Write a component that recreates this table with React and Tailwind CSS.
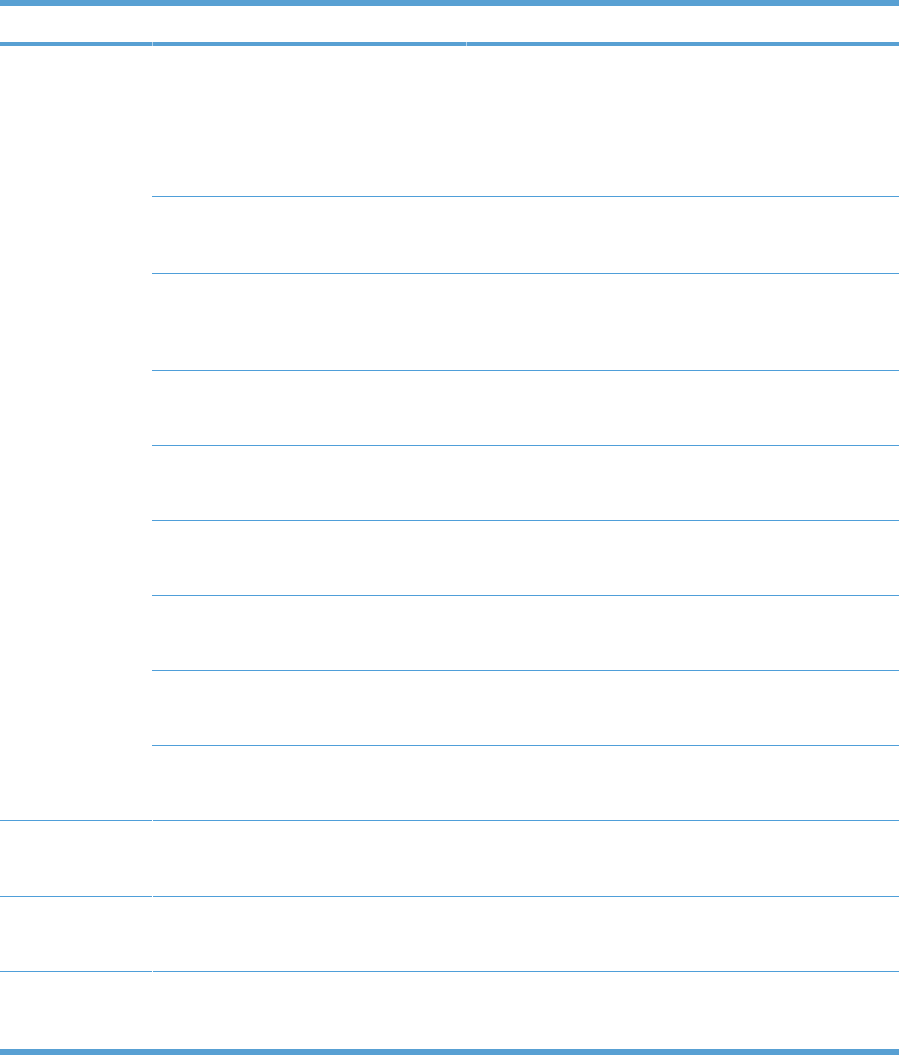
const subRows = [150, 77, 97, 75, 75, 75, 75, 75, 75];
const fullRows = [76, 75, 78];

const heightClass = {
  150: "h-[150px]",
  77: "h-[77px]",
  97: "h-[97px]",
  75: "h-[75px]",
  76: "h-[76px]",
  78: "h-[78px]",
};

const App = () => {
  return (
    <div className="w-[900px] h-[1055px] bg-white font-['Liberation_Sans',sans-serif]">
      <div className="w-[899px] flex flex-col">
        <div className="h-[6px] bg-[#58a0d3]"></div>

        {/* header */}
        <div className="flex h-[36px]">
          <div className="w-[152px]"></div>
          <div className="w-[314px]"></div>
          <div className="flex-1"></div>
        </div>
        <div className="flex h-[4px] gap-px bg-[#b3d3eb]">
          <div className="w-[152px] bg-[#58a0d3]"></div>
          <div className="w-[313px] bg-[#58a0d3]"></div>
          <div className="flex-1 bg-[#58a0d3]"></div>
        </div>

        {/* grouped rows */}
        <div className="flex">
          <div className="w-[152px]"></div>
          <div className="flex-1 flex flex-col">
            {subRows.map((h, i) => (
              <div
                key={i}
                className={`flex ${heightClass[h]} ${i > 0 ? "border-t border-[#4f9fd9]" : ""}`}
              >
                <div className="w-[314px]"></div>
                <div className="flex-1"></div>
              </div>
            ))}
          </div>
        </div>

        {/* single rows */}
        {fullRows.map((h, i) => (
          <div key={i} className={`flex ${heightClass[h]}`}>
            <div className="w-[152px] border-t border-[#4f9fd9]"></div>
            <div className="flex-1 ml-px border-t border-[#4f9fd9]"></div>
          </div>
        ))}

        <div className="h-[6px] bg-[#58a0d3]"></div>
      </div>
    </div>
  )
}

export default App
